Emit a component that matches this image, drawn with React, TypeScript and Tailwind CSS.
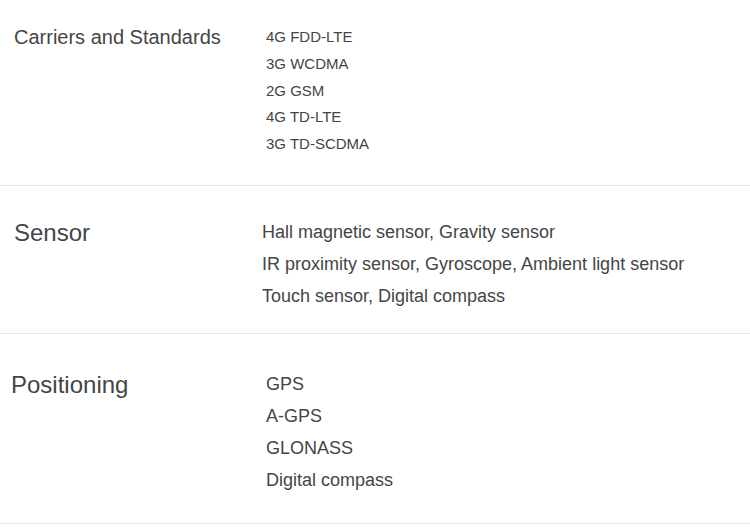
export default function App() {
  return (
    <div className="min-h-screen w-[750px] bg-white font-['Liberation_Sans',Arial,sans-serif] text-[#454545]">
      {/* Carriers */}
      <section className="flex border-b border-[#e6e6e6] pt-[23px] h-[186px]">
        <h3 className="w-[266px] pl-[14px] text-[20px] leading-[28px]">Carriers and Standards</h3>
        <ul className="pt-[1px] text-[15px] leading-[26.75px]">
          <li>4G FDD-LTE</li>
          <li>3G WCDMA</li>
          <li>2G GSM</li>
          <li>4G TD-LTE</li>
          <li>3G TD-SCDMA</li>
        </ul>
      </section>

      {/* Sensor */}
      <section className="flex border-b border-[#e6e6e6] pt-[30px] h-[148px]">
        <h3 className="w-[262px] pl-[14px] pt-[1px] text-[24px] leading-[32px]">Sensor</h3>
        <ul className="text-[18px] leading-[32px]">
          <li>Hall magnetic sensor, Gravity sensor</li>
          <li>IR proximity sensor, Gyroscope, Ambient light sensor</li>
          <li>Touch sensor, Digital compass</li>
        </ul>
      </section>

      {/* Positioning */}
      <section className="flex border-b border-[#e6e6e6] pt-[34px] h-[190px]">
        <h3 className="w-[266px] pl-[11px] pt-[1px] text-[24px] leading-[32px]">Positioning</h3>
        <ul className="text-[18px] leading-[32px]">
          <li>GPS</li>
          <li>A-GPS</li>
          <li>GLONASS</li>
          <li>Digital compass</li>
        </ul>
      </section>
    </div>
  );
}
